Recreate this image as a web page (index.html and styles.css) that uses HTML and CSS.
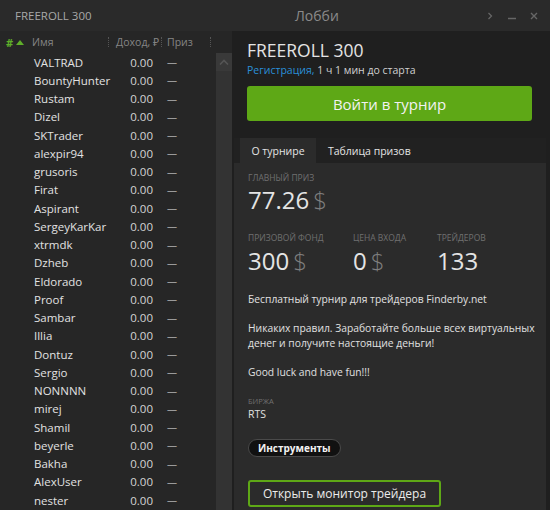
FILE: index.html
```html
<!DOCTYPE html>
<html lang="ru">
<head>
<meta charset="utf-8">
<title>Лобби</title>
<link rel="stylesheet" href="styles.css">
</head>
<body>
<div class="window">
  <div class="titlebar">
    <div class="app-title">FREEROLL 300</div>
    <div class="win-title">Лобби</div>
    <div class="controls">
      <svg class="ctl" width="10" height="10" viewBox="0 0 10 10"><path d="M3.5 2 L6.5 5 L3.5 8" fill="none" stroke="#666" stroke-width="1.3"/></svg>
      <svg class="ctl" width="10" height="10" viewBox="0 0 10 10"><path d="M1 7.5 H9" stroke="#666" stroke-width="1.5"/></svg>
      <svg class="ctl" width="10" height="10" viewBox="0 0 10 10"><path d="M2 2 L8 8 M8 2 L2 8" stroke="#666" stroke-width="1.4"/></svg>
    </div>
  </div>
  <div class="main">
    <div class="left">
      <div class="thead">
        <div class="th th-num"><span class="hash">#</span><svg width="8" height="5" viewBox="0 0 8 5"><path d="M0 5 L4 0 L8 5 Z" fill="#5fae2a"/></svg></div>
        <div class="th th-name">Имя</div>
        <div class="sep"><span class="dots"></span></div>
        <div class="th th-inc">Доход, ₽</div>
        <div class="sep"><span class="dots"></span></div>
        <div class="th th-prize">Приз</div>
        <div class="sep"><span class="dots"></span></div>
      </div>
      <div class="tbody">
        <div class="rows">
          <div class="row"><span class="name">VALTRAD</span><span class="inc">0.00</span><span class="prize">—</span></div>
          <div class="row"><span class="name">BountyHunter</span><span class="inc">0.00</span><span class="prize">—</span></div>
          <div class="row"><span class="name">Rustam</span><span class="inc">0.00</span><span class="prize">—</span></div>
          <div class="row"><span class="name">Dizel</span><span class="inc">0.00</span><span class="prize">—</span></div>
          <div class="row"><span class="name">SKTrader</span><span class="inc">0.00</span><span class="prize">—</span></div>
          <div class="row"><span class="name">alexpir94</span><span class="inc">0.00</span><span class="prize">—</span></div>
          <div class="row"><span class="name">grusoris</span><span class="inc">0.00</span><span class="prize">—</span></div>
          <div class="row"><span class="name">Firat</span><span class="inc">0.00</span><span class="prize">—</span></div>
          <div class="row"><span class="name">Aspirant</span><span class="inc">0.00</span><span class="prize">—</span></div>
          <div class="row"><span class="name">SergeyKarKar</span><span class="inc">0.00</span><span class="prize">—</span></div>
          <div class="row"><span class="name">xtrmdk</span><span class="inc">0.00</span><span class="prize">—</span></div>
          <div class="row"><span class="name">Dzheb</span><span class="inc">0.00</span><span class="prize">—</span></div>
          <div class="row"><span class="name">Eldorado</span><span class="inc">0.00</span><span class="prize">—</span></div>
          <div class="row"><span class="name">Proof</span><span class="inc">0.00</span><span class="prize">—</span></div>
          <div class="row"><span class="name">Sambar</span><span class="inc">0.00</span><span class="prize">—</span></div>
          <div class="row"><span class="name">Illia</span><span class="inc">0.00</span><span class="prize">—</span></div>
          <div class="row"><span class="name">Dontuz</span><span class="inc">0.00</span><span class="prize">—</span></div>
          <div class="row"><span class="name">Sergio</span><span class="inc">0.00</span><span class="prize">—</span></div>
          <div class="row"><span class="name">NONNNN</span><span class="inc">0.00</span><span class="prize">—</span></div>
          <div class="row"><span class="name">mirej</span><span class="inc">0.00</span><span class="prize">—</span></div>
          <div class="row"><span class="name">Shamil</span><span class="inc">0.00</span><span class="prize">—</span></div>
          <div class="row"><span class="name">beyerle</span><span class="inc">0.00</span><span class="prize">—</span></div>
          <div class="row"><span class="name">Bakha</span><span class="inc">0.00</span><span class="prize">—</span></div>
          <div class="row"><span class="name">AlexUser</span><span class="inc">0.00</span><span class="prize">—</span></div>
          <div class="row"><span class="name">nester</span><span class="inc">0.00</span><span class="prize">—</span></div>
        </div>
        <div class="scrollbar">
          <div class="sb-up"><svg width="10" height="6" viewBox="0 0 10 6"><path d="M1 5.5 L5 1.5 L9 5.5" fill="none" stroke="#555" stroke-width="1.6"/></svg></div>
        </div>
      </div>
    </div>
    <div class="right">
      <div class="head">
        <div class="t-title">FREEROLL 300</div>
        <div class="t-sub"><span class="link">Регистрация,</span> 1 ч 1 мин до старта</div>
        <div class="join">Войти в турнир</div>
      </div>
      <div class="tabs">
        <div class="tab active">О турнире</div>
        <div class="tab">Таблица призов</div>
      </div>
      <div class="panel">
        <div class="lbl">ГЛАВНЫЙ ПРИЗ</div>
        <div class="big">77.26<span class="cur">$</span></div>
        <div class="stats">
          <div class="stat s1"><div class="lbl">ПРИЗОВОЙ ФОНД</div><div class="big val">300<span class="cur">$</span></div></div>
          <div class="stat s2"><div class="lbl">ЦЕНА ВХОДА</div><div class="big val">0<span class="cur">$</span></div></div>
          <div class="stat"><div class="lbl">ТРЕЙДЕРОВ</div><div class="big val">133</div></div>
        </div>
        <p class="desc">Бесплатный турнир для трейдеров Finderby.net</p>
        <p class="desc">Никаких правил. Заработайте больше всех виртуальных денег и получите настоящие деньги!</p>
        <p class="desc">Good luck and have fun!!!</p>
        <div class="lbl small">БИРЖА</div>
        <div class="exch">RTS</div>
        <div class="pill">Инструменты</div>
        <div class="monitor">Открыть монитор трейдера</div>
      </div>
    </div>
  </div>
</div>
</body>
</html>
```
FILE: styles.css
```css
html, body {
  margin: 0;
  padding: 0;
  background: #1c1c1c;
}
body {
  width: 550px;
  height: 510px;
  overflow: hidden;
  font-family: "Open Sans", "Noto Sans", sans-serif;
  color: #dcdcdc;
}
.window {
  display: flex;
  flex-direction: column;
  height: 510px;
}
.titlebar {
  height: 31px;
  flex: none;
  background: #2a2a2a;
  display: flex;
  align-items: center;
}
.app-title {
  margin-left: 15px;
  font-size: 11.5px;
  color: #a8a8a8;
  width: 200px;
}
.win-title {
  font-size: 14px;
  color: #8a8a8a;
  margin-left: 80px;
}
.controls {
  margin-left: auto;
  margin-right: 11px;
  display: flex;
  gap: 12px;
  align-items: center;
}
.ctl { display: block; }
.main {
  flex: 1;
  display: flex;
  min-height: 0;
}
.left {
  width: 232px;
  flex: none;
  background: #262626;
  display: flex;
  flex-direction: column;
}
.thead {
  height: 22px;
  display: flex;
  align-items: center;
  font-size: 10.5px;
  color: #858585;
}
.th { white-space: nowrap; }
.th-num {
  width: 26px;
  padding-left: 6px;
  box-sizing: border-box;
  display: flex;
  align-items: center;
  gap: 3px;
}
.th-num svg { display: block; }
.hash { color: #5fae2a; font-weight: bold; font-size: 11px; }
.th-name { width: 81px; padding-left: 6px; box-sizing: border-box; }
.sep {
  width: 3px;
  display: flex;
  justify-content: center;
}
.dots {
  width: 0;
  height: 10px;
  border-left: 1px dotted #555;
}
.th-inc { width: 50px; text-align: right; padding-right: 1px; box-sizing: border-box; }
.th-prize { width: 46px; padding-left: 4px; box-sizing: border-box; }
.tbody {
  flex: 1;
  display: flex;
  min-height: 0;
}
.rows {
  flex: 1;
  overflow: hidden;
}
.row {
  height: 18.25px;
  display: flex;
  align-items: center;
  font-size: 11.5px;
  color: #e2e2e2;
}
.name { width: 86px; padding-left: 34px; white-space: nowrap; }
.inc { width: 33px; text-align: right; color: #d4d4d4; }
.prize { padding-left: 14px; color: #9a9a9a; font-size: 10px; }
.scrollbar {
  width: 16px;
  flex: none;
  background: #333333;
}
.sb-up {
  height: 18px;
  background: #393939;
  display: flex;
  align-items: center;
  justify-content: center;
}
.sb-up svg { display: block; }
.right {
  flex: 1;
  background: #1f1f1f;
  display: flex;
  flex-direction: column;
  min-width: 0;
}
.head {
  padding: 7px 18px 0 15px;
}
.t-title {
  font-size: 17.5px;
  line-height: 24px;
  color: #e4e4e4;
}
.t-sub {
  font-size: 10.5px;
  line-height: 14px;
  margin-top: 1px;
  color: #d0d0d0;
}
.link { color: #2a8fd8; }
.join {
  margin-top: 9px;
  height: 35px;
  background: #5ea816;
  border-radius: 3px;
  color: #f2f2f2;
  font-size: 15px;
  display: flex;
  align-items: center;
  justify-content: center;
}
.tabs {
  margin: 17px 4px 0 2px;
  padding-left: 6px;
  height: 25px;
  display: flex;
  background: #212121;
}
.tab {
  font-size: 10.5px;
  color: #e4e4e4;
  padding: 0 12px;
  display: flex;
  align-items: center;
}
.tab.active {
  background: #2b2b2b;
  width: 76px;
  box-sizing: border-box;
  justify-content: center;
  padding: 0;
}
.panel {
  flex: 1;
  margin: 0 4px 0 2px;
  background: #2b2b2b;
  padding: 9px 2px 0 14px;
}
.lbl {
  font-size: 8.5px;
  line-height: 12px;
  color: #707070;
}
.lbl.small { font-size: 7.5px; line-height: 10px; margin-top: 15.5px; }
.big {
  font-size: 24px;
  line-height: 32px;
  color: #e4e4e4;
}
.big.val { line-height: 34px; }
.cur {
  color: #7e7e7e;
  margin-left: 4px;
  font-weight: 300;
}
.stats {
  display: flex;
  margin-top: 16px;
}
.s1 { width: 105px; }
.s2 { width: 84px; }
.desc {
  margin: 14px 0 0 0;
  font-size: 10.3px;
  line-height: 15px;
  color: #e0e0e0;
}
.exch {
  font-size: 10.5px;
  line-height: 14px;
  color: #e0e0e0;
  margin-top: 1px;
}
.pill {
  margin-top: 18px;
  display: inline-flex;
  align-items: center;
  height: 18px;
  padding: 0 9px;
  box-sizing: border-box;
  background: #111111;
  border: 1px solid #4a4a4a;
  border-radius: 9px;
  font-size: 10px;
  font-weight: bold;
  color: #f2f2f2;
}
.monitor {
  margin-top: 23px;
  width: 193px;
  height: 27px;
  box-sizing: border-box;
  border: 2px solid #5ea816;
  border-radius: 3px;
  display: flex;
  align-items: center;
  justify-content: center;
  font-size: 12px;
  color: #ececec;
}
```
